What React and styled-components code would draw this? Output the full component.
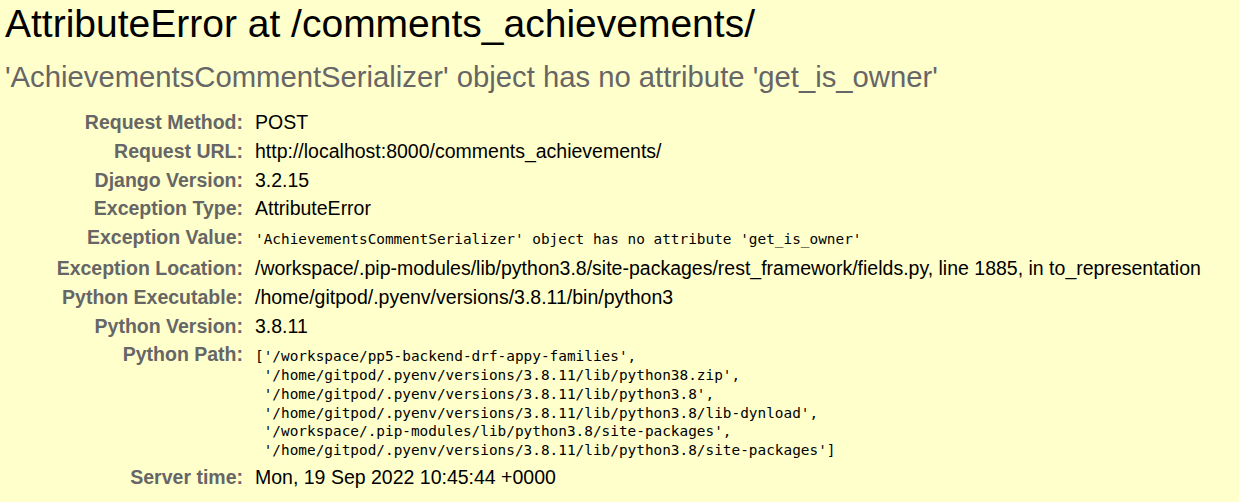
import React from "react";
import styled, { createGlobalStyle } from "styled-components";

const Global = createGlobalStyle`
  html, body {
    margin: 0;
    padding: 0;
    background: #ffc;
  }
  body {
    font-family: "Liberation Sans", Arial, sans-serif;
    color: #000;
  }
`;

const Summary = styled.div`
  background: #ffc;
  padding: 1px 5px 20px 5px;
  min-height: 480px;
`;

const Title = styled.h1`
  margin: 0;
  font-size: 39px;
  line-height: 45px;
  font-weight: normal;
`;

const Subtitle = styled.h2`
  margin: 14px 0 14px 0;
  font-size: 29.25px;
  line-height: 34px;
  font-weight: normal;
  color: #666;
`;

const Meta = styled.div`
  display: grid;
  grid-template-columns: 238px 1fr;
  column-gap: 12px;
  font-size: 19.5px;
  line-height: 22.8px;
`;

const Label = styled.div`
  text-align: right;
  font-weight: bold;
  color: #666;
  padding: 3px 0;
`;

const Value = styled.div`
  padding: 3px 0;
  color: #000;
`;

const Code = styled.code`
  font-family: "DejaVu Sans Mono", "Liberation Mono", monospace;
  font-size: 14.4px;
`;

const Pre = styled.pre`
  margin: 3.5px 0 0 0;
  font-family: "DejaVu Sans Mono", "Liberation Mono", monospace;
  font-size: 14.4px;
  line-height: 18.87px;
  white-space: pre-wrap;
`;

const pythonPath = `['/workspace/pp5-backend-drf-appy-families',
 '/home/gitpod/.pyenv/versions/3.8.11/lib/python38.zip',
 '/home/gitpod/.pyenv/versions/3.8.11/lib/python3.8',
 '/home/gitpod/.pyenv/versions/3.8.11/lib/python3.8/lib-dynload',
 '/workspace/.pip-modules/lib/python3.8/site-packages',
 '/home/gitpod/.pyenv/versions/3.8.11/lib/python3.8/site-packages']`;

const rows = [
  ["Request Method:", "POST"],
  ["Request URL:", "http://localhost:8000/comments_achievements/"],
  ["Django Version:", "3.2.15"],
  ["Exception Type:", "AttributeError"],
  [
    "Exception Value:",
    <Code>'AchievementsCommentSerializer' object has no attribute 'get_is_owner'</Code>,
  ],
  [
    "Exception Location:",
    "/workspace/.pip-modules/lib/python3.8/site-packages/rest_framework/fields.py, line 1885, in to_representation",
  ],
  ["Python Executable:", "/home/gitpod/.pyenv/versions/3.8.11/bin/python3"],
  ["Python Version:", "3.8.11"],
  ["Python Path:", <Pre>{pythonPath}</Pre>],
  ["Server time:", "Mon, 19 Sep 2022 10:45:44 +0000"],
];

export default function App() {
  return (
    <>
      <Global />
      <Summary>
        <Title>AttributeError at /comments_achievements/</Title>
        <Subtitle>
          'AchievementsCommentSerializer' object has no attribute 'get_is_owner'
        </Subtitle>
        <Meta>
          {rows.map(([label, value]) => (
            <React.Fragment key={label}>
              <Label>{label}</Label>
              <Value>{value}</Value>
            </React.Fragment>
          ))}
        </Meta>
      </Summary>
    </>
  );
}
